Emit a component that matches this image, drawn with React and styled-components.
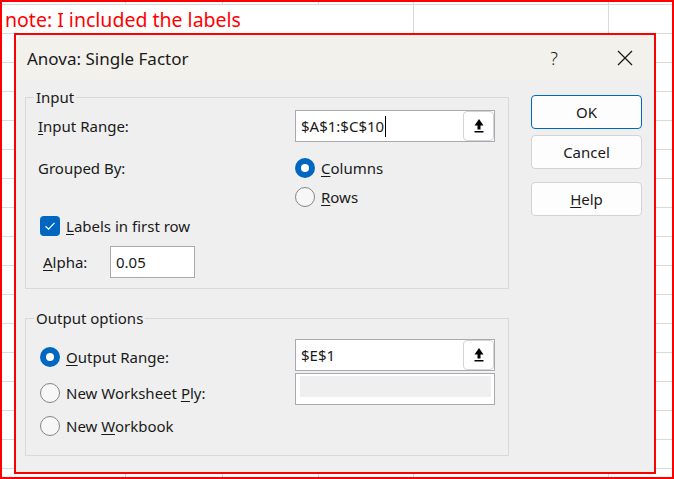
import styled, { createGlobalStyle } from "styled-components";

const GlobalStyle = createGlobalStyle`
  html, body {
    margin: 0;
    padding: 0;
    background: #ffffff;
  }
  * {
    box-sizing: border-box;
  }
`;

const FONT = `"Segoe UI", "Noto Sans", "Open Sans", sans-serif`;

function UploadIcon() {
  return (
    <svg width="12" height="16" viewBox="0 0 12 16">
      <polygon points="6,1 10.5,7.5 1.5,7.5" fill="#000" />
      <rect x="4.5" y="7" width="3" height="4.5" fill="#000" />
      <rect x="1.5" y="13" width="9" height="1.5" fill="#000" />
    </svg>
  );
}

function CloseIcon() {
  return (
    <svg width="16" height="16" viewBox="0 0 16 16">
      <path d="M1 1 L15 15 M15 1 L1 15" stroke="#1a1a1a" strokeWidth="1.3" fill="none" />
    </svg>
  );
}

function CheckMark() {
  return (
    <svg width="12" height="10" viewBox="0 0 12 10">
      <path d="M1.5 5.2 L4.6 8.2 L10.5 1.8" stroke="#fff" strokeWidth="1.2" fill="none" />
    </svg>
  );
}

function RefField({ value, caret }) {
  return (
    <Field $width={200}>
      <FieldText>
        {value}
        {caret && <Caret />}
      </FieldText>
      <RefButton>
        <UploadIcon />
      </RefButton>
    </Field>
  );
}

function Radio({ checked, children, mt }) {
  return (
    <OptionRow $mt={mt}>
      <RadioDot $checked={checked} />
      <span>{children}</span>
    </OptionRow>
  );
}

function App() {
  return (
    <>
      <GlobalStyle />
      <Sheet>
        <Note>note: I included the labels</Note>
        <DialogFrame>
          <Dialog>
            <TitleBar>
              <Title>Anova: Single Factor</Title>
              <TitleButtons>
                <TitleButton>?</TitleButton>
                <TitleButton>
                  <CloseIcon />
                </TitleButton>
              </TitleButtons>
            </TitleBar>
            <Body>
              <LeftColumn>
                <GroupBox $height={192}>
                  <Legend>Input</Legend>
                  <FieldRow $mt={12}>
                    <Label $width={269} $pl={12}>
                      <u>I</u>nput Range:
                    </Label>
                    <RefField value="$A$1:$C$10" caret />
                  </FieldRow>
                  <GroupedRow>
                    <Label $width={269} $pl={12} $h={29}>
                      Grouped By:
                    </Label>
                    <RadioStack>
                      <Radio checked>
                        <u>C</u>olumns
                      </Radio>
                      <Radio>
                        <u>R</u>ows
                      </Radio>
                    </RadioStack>
                  </GroupedRow>
                  <CheckRow>
                    <CheckBox>
                      <CheckMark />
                    </CheckBox>
                    <span>
                      <u>L</u>abels in first row
                    </span>
                  </CheckRow>
                  <FieldRow $mt={6}>
                    <Label $width={84} $pl={17}>
                      <u>A</u>lpha:
                    </Label>
                    <Field $width={85}>
                      <FieldText>0.05</FieldText>
                    </Field>
                  </FieldRow>
                </GroupBox>
                <GroupBox $height={138}>
                  <Legend>Output options</Legend>
                  <OutputGrid>
                    <OptionStack>
                      <Radio checked mt={23}>
                        <u>O</u>utput Range:
                      </Radio>
                      <Radio mt={7}>
                        New Worksheet <u>P</u>ly:
                      </Radio>
                      <Radio mt={4}>
                        New <u>W</u>orkbook
                      </Radio>
                    </OptionStack>
                    <FieldStack>
                      <RefField value="$E$1" />
                      <Field $width={200}>
                        <DisabledFill />
                      </Field>
                    </FieldStack>
                  </OutputGrid>
                </GroupBox>
              </LeftColumn>
              <ButtonColumn>
                <DialogButton $primary>OK</DialogButton>
                <DialogButton $mt={6}>Cancel</DialogButton>
                <DialogButton $mt={13}>
                  <u>H</u>elp
                </DialogButton>
              </ButtonColumn>
            </Body>
          </Dialog>
        </DialogFrame>
      </Sheet>
    </>
  );
}

const Sheet = styled.div`
  width: 674px;
  height: 479px;
  border: 2px solid #ff0000;
  font-family: ${FONT};
  background-color: #ffffff;
  background-image:
    linear-gradient(
      to right,
      transparent 123px,
      #dadada 123px 124px,
      transparent 124px 220px,
      #dadada 220px 221px,
      transparent 221px 316px,
      #dadada 316px 317px,
      transparent 317px 411px,
      #dadada 411px 412px,
      transparent 412px 606px,
      #dadada 606px 607px,
      transparent 607px
    ),
    linear-gradient(to bottom, #dadada 1px, transparent 1px);
  background-size: 100% 100%, 100% 29px;
  background-position: 0 0, 0 2px;
  background-repeat: no-repeat, repeat;
`;

const Note = styled.div`
  margin: 3px 0 0 3px;
  width: 408px;
  height: 28px;
  padding-top: 1px;
  background: #ffffff;
  color: #ff0000;
  font-size: 19.5px;
  line-height: 28px;
  white-space: nowrap;
`;

const DialogFrame = styled.div`
  margin-left: 12px;
  width: 642px;
  height: 441px;
  border: 2px solid #ff0000;
  background: #ffffff;
`;

const Dialog = styled.div`
  width: 100%;
  height: 100%;
  display: flex;
  flex-direction: column;
  background: #efefef;
  border-top-left-radius: 8px;
  border-top-right-radius: 4px;
  overflow: hidden;
  color: #1a1a1a;
  font-size: 15px;
`;

const TitleBar = styled.div`
  height: 45px;
  flex: none;
  display: flex;
  align-items: center;
  justify-content: space-between;
  padding: 1px 6px 0 11px;
  background: #f3f1ec;
`;

const Title = styled.div`
  font-size: 17px;
  color: #1a1a1a;
`;

const TitleButtons = styled.div`
  display: flex;
  gap: 25px;
`;

const TitleButton = styled.div`
  width: 46px;
  height: 44px;
  display: flex;
  align-items: center;
  justify-content: center;
  font-size: 18px;
  font-weight: 300;
  color: #1a1a1a;
`;

const Body = styled.div`
  flex: 1;
  display: flex;
  padding-left: 9px;
`;

const LeftColumn = styled.div`
  width: 484px;
  padding-top: 17px;
  display: flex;
  flex-direction: column;
  gap: 29px;
`;

const GroupBox = styled.div`
  position: relative;
  height: ${(p) => p.$height}px;
  border: 1px solid #d9d9d9;
  display: flex;
  flex-direction: column;
`;

const Legend = styled.div`
  position: absolute;
  top: -11px;
  left: 8px;
  padding: 0 2px;
  background: #efefef;
  line-height: 20px;
`;

const FieldRow = styled.div`
  display: flex;
  align-items: center;
  margin-top: ${(p) => p.$mt || 0}px;
`;

const Label = styled.div`
  width: ${(p) => p.$width}px;
  padding-left: ${(p) => p.$pl}px;
  height: ${(p) => (p.$h ? `${p.$h}px` : "auto")};
  display: flex;
  align-items: center;
  flex: none;
  white-space: nowrap;

  u {
    text-underline-offset: 2px;
  }
`;

const Field = styled.div`
  width: ${(p) => p.$width}px;
  height: 32px;
  flex: none;
  display: flex;
  align-items: stretch;
  background: #ffffff;
  border: 1px solid #a9a9b0;
`;

const FieldText = styled.div`
  flex: 1;
  display: flex;
  align-items: center;
  padding-left: 5px;
  white-space: nowrap;
`;

const Caret = styled.span`
  display: inline-block;
  width: 1px;
  height: 21px;
  background: #000000;
  margin-left: 1px;
`;

const RefButton = styled.div`
  width: 31px;
  flex: none;
  display: flex;
  align-items: center;
  justify-content: center;
  background: #ffffff;
  border: 1px solid #d4d4d4;
  border-radius: 4px;
`;

const GroupedRow = styled.div`
  display: flex;
  margin-top: 11px;
`;

const RadioStack = styled.div`
  display: flex;
  flex-direction: column;
`;

const OptionRow = styled.div`
  height: 29px;
  margin-top: ${(p) => p.$mt || 0}px;
  display: flex;
  align-items: center;
  gap: 6px;
  white-space: nowrap;

  u {
    text-underline-offset: 2px;
  }
`;

const RadioDot = styled.span`
  width: 20px;
  height: 20px;
  flex: none;
  border-radius: 50%;
  background: ${(p) => (p.$checked ? "#0067c0" : "#f7f7f7")};
  border: ${(p) => (p.$checked ? "none" : "1px solid #858585")};
  display: flex;
  align-items: center;
  justify-content: center;

  &::after {
    content: "";
    display: ${(p) => (p.$checked ? "block" : "none")};
    width: 8px;
    height: 8px;
    border-radius: 50%;
    background: #ffffff;
  }
`;

const CheckRow = styled.div`
  height: 28px;
  margin-top: 1px;
  padding-left: 14px;
  display: flex;
  align-items: center;
  gap: 6px;

  u {
    text-underline-offset: 2px;
  }
`;

const CheckBox = styled.span`
  width: 20px;
  height: 20px;
  border-radius: 4px;
  background: #0067c0;
  display: flex;
  align-items: center;
  justify-content: center;
`;

const OutputGrid = styled.div`
  display: flex;
`;

const OptionStack = styled.div`
  width: 269px;
  padding-left: 14px;
  display: flex;
  flex-direction: column;
`;

const FieldStack = styled.div`
  padding-top: 20px;
  display: flex;
  flex-direction: column;
  gap: 2px;
`;

const DisabledFill = styled.div`
  height: 21px;
  flex: 1;
  margin: 2px 3px 0 4px;
  background: #efefef;
`;

const ButtonColumn = styled.div`
  margin-left: 22px;
  padding-top: 15px;
  width: 111px;
  display: flex;
  flex-direction: column;
`;

const DialogButton = styled.div`
  height: 34px;
  margin-top: ${(p) => p.$mt || 0}px;
  display: flex;
  align-items: center;
  justify-content: center;
  background: #fdfdfd;
  border: 1px solid ${(p) => (p.$primary ? "#0067c0" : "#d3d3d3")};
  border-radius: 4px;

  u {
    text-underline-offset: 2px;
  }
`;

export default App;
